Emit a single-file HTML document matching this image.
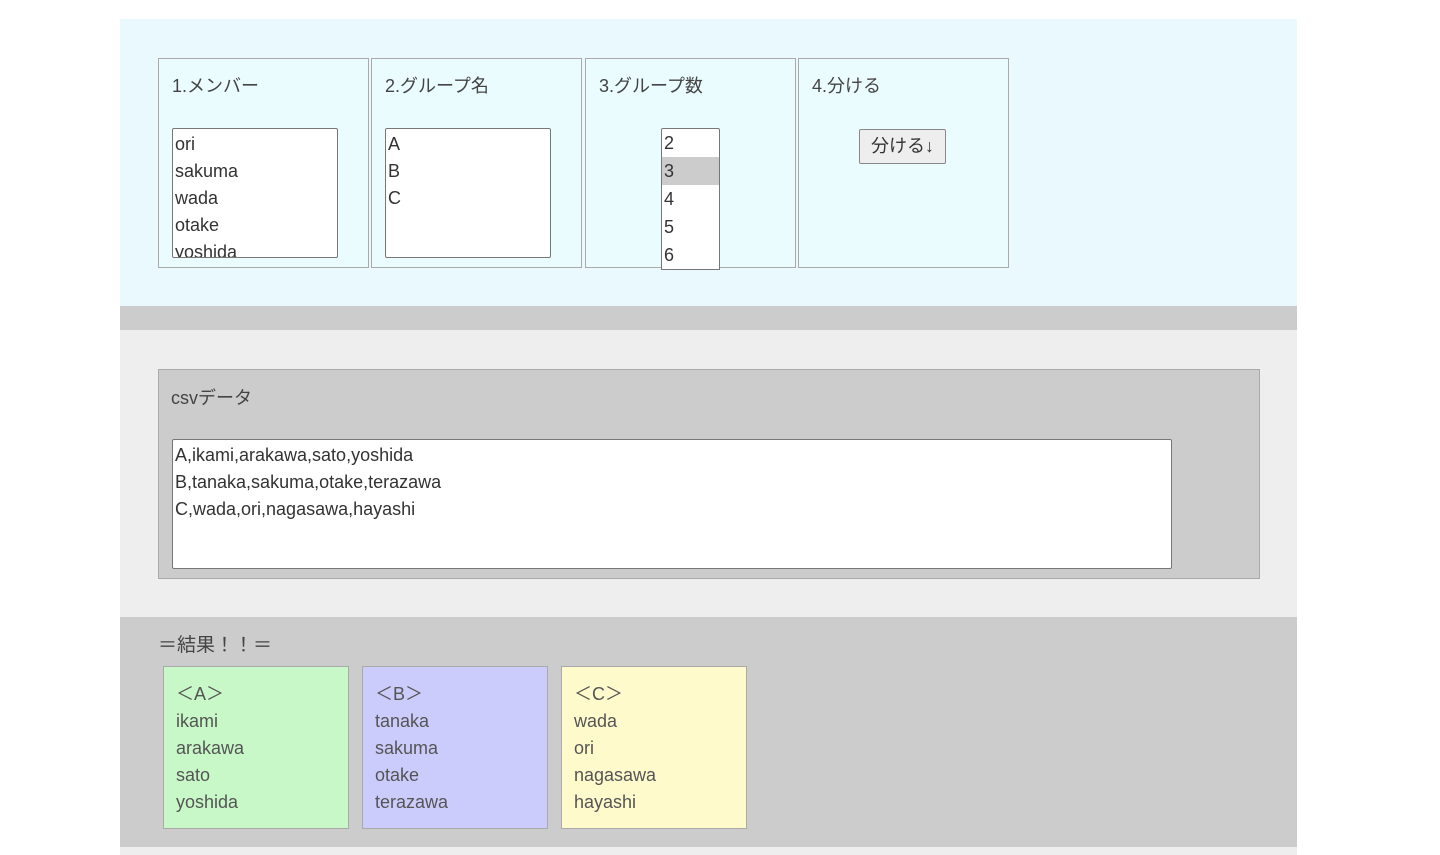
<!DOCTYPE html>
<html><head><meta charset="utf-8"><style>
*{box-sizing:border-box;margin:0;padding:0}
body{width:1440px;height:855px;background:#fff;font-family:"Liberation Sans","Noto Sans CJK JP",sans-serif;color:#444;position:relative;overflow:hidden}
.a{position:absolute}
.panel{position:absolute;top:58px;width:211px;height:210px;background:#ebfcff;border:1px solid #aaa}
.panel h{position:absolute;left:13px;top:13px;font-size:18px;color:#444}
.ta{position:absolute;background:#fff;border:1px solid #777;border-radius:2px;font-size:18px;line-height:27px;padding-left:2px;overflow:hidden;color:#333}
.card{position:absolute;top:666px;width:186px;height:163px;border:1px solid #aaa;padding:14px 0 0 12px;font-size:18px;line-height:27px;color:#555}
</style></head><body>
<div class="a" style="left:120px;top:19px;width:1177px;height:287px;background:#eaf9fd"></div>
<div class="a" style="left:120px;top:306px;width:1177px;height:24px;background:#ccc"></div>
<div class="a" style="left:120px;top:330px;width:1177px;height:287px;background:#eee"></div>
<div class="a" style="left:120px;top:617px;width:1177px;height:230px;background:#ccc"></div>
<div class="a" style="left:120px;top:847px;width:1177px;height:8px;background:#eee"></div>

<div class="panel" style="left:158px"><h>1.メンバー</h>
<div class="ta" style="left:13px;top:69px;width:166px;height:130px;padding-top:2px">ori<br>sakuma<br>wada<br>otake<br>yoshida</div></div>
<div class="panel" style="left:371px"><h>2.グループ名</h>
<div class="ta" style="left:13px;top:69px;width:166px;height:130px;padding-top:2px">A<br>B<br>C</div></div>
<div class="panel" style="left:585px"><h>3.グループ数</h>
<div class="ta" style="left:75px;top:69px;width:59px;height:142px;border-radius:2px 2px 0 0;line-height:28px;padding-top:0;padding-left:0"><div style="padding-left:2px">2</div><div style="padding-left:2px;background:#ccc">3</div><div style="padding-left:2px">4</div><div style="padding-left:2px">5</div><div style="padding-left:2px">6</div></div></div>
<div class="panel" style="left:798px"><h>4.分ける</h>
<div class="a" style="left:60px;top:70px;width:87px;height:35px;background:#eee;border:1px solid #888;border-radius:2px;font-size:18px;line-height:33px;text-align:center;color:#333">分ける↓</div></div>

<div class="a" style="left:158px;top:369px;width:1102px;height:210px;background:#ccc;border:1px solid #aaa">
<div class="a" style="left:12px;top:14px;font-size:18px">csvデータ</div>
<div class="ta" style="left:13px;top:69px;width:1000px;height:130px;padding-top:2px">A,ikami,arakawa,sato,yoshida<br>B,tanaka,sakuma,otake,terazawa<br>C,wada,ori,nagasawa,hayashi</div></div>

<div class="a" style="left:158px;top:630px;font-size:19px">＝結果！！＝</div>
<div class="card" style="left:163px;background:#c8f8c8">＜A＞<br>ikami<br>arakawa<br>sato<br>yoshida</div>
<div class="card" style="left:362px;background:#ccccfc">＜B＞<br>tanaka<br>sakuma<br>otake<br>terazawa</div>
<div class="card" style="left:561px;background:#fefacc">＜C＞<br>wada<br>ori<br>nagasawa<br>hayashi</div>
</body></html>
